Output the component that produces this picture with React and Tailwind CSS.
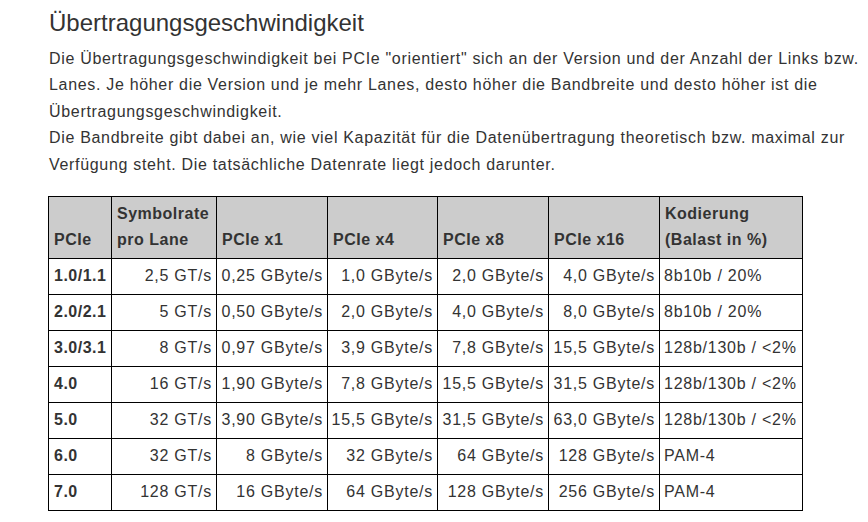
import React from "react";

const rows = [
  ["1.0/1.1", "2,5 GT/s", "0,25 GByte/s", "1,0 GByte/s", "2,0 GByte/s", "4,0 GByte/s", "8b10b / 20%"],
  ["2.0/2.1", "5 GT/s", "0,50 GByte/s", "2,0 GByte/s", "4,0 GByte/s", "8,0 GByte/s", "8b10b / 20%"],
  ["3.0/3.1", "8 GT/s", "0,97 GByte/s", "3,9 GByte/s", "7,8 GByte/s", "15,5 GByte/s", "128b/130b / <2%"],
  ["4.0", "16 GT/s", "1,90 GByte/s", "7,8 GByte/s", "15,5 GByte/s", "31,5 GByte/s", "128b/130b / <2%"],
  ["5.0", "32 GT/s", "3,90 GByte/s", "15,5 GByte/s", "31,5 GByte/s", "63,0 GByte/s", "128b/130b / <2%"],
  ["6.0", "32 GT/s", "8 GByte/s", "32 GByte/s", "64 GByte/s", "128 GByte/s", "PAM-4"],
  ["7.0", "128 GT/s", "16 GByte/s", "64 GByte/s", "128 GByte/s", "256 GByte/s", "PAM-4"],
];

export default function App() {
  return (
    <div
      className="bg-white text-[#333333] pl-[49px] pr-[8px] pt-[8px] w-[868px] h-[522px] overflow-hidden"
      style={{ fontFamily: '"Liberation Sans", Arial, sans-serif' }}
    >
      <h1 className="text-[24px] leading-[29px] font-normal">Übertragungsgeschwindigkeit</h1>
      <p className="mt-[9px] text-[16px] leading-[26.4px] tracking-[0.68px]">
        Die Übertragungsgeschwindigkeit bei PCIe "orientiert" sich an der Version und der Anzahl der Links bzw. Lanes. Je höher die Version und je mehr Lanes, desto höher die Bandbreite und desto höher ist die Übertragungsgeschwindigkeit.
        <br />
        Die Bandbreite gibt dabei an, wie viel Kapazität für die Datenübertragung theoretisch bzw. maximal zur Verfügung steht. Die tatsächliche Datenrate liegt jedoch darunter.
      </p>
      <table className="mt-[18px] -ml-[1px] border-collapse table-fixed w-[754px] text-[16px] leading-[26px]">
        <colgroup>
          <col className="w-[63px]" />
          <col className="w-[105px]" />
          <col className="w-[111px]" />
          <col className="w-[110px]" />
          <col className="w-[111px]" />
          <col className="w-[111px]" />
          <col className="w-[143px]" />
        </colgroup>
        <thead>
          <tr className="bg-[#cccccc]">
            {["PCIe", "Symbolrate pro Lane", "PCIe x1", "PCIe x4", "PCIe x8", "PCIe x16", "Kodierung (Balast in %)"].map((h, i) => (
              <th
                key={i}
                className="border border-black px-[5px] pt-[4px] pb-[5px] text-left align-bottom font-bold tracking-[0.5px]"
              >
                {h === "Symbolrate pro Lane" ? (
                  <>Symbolrate<br />pro Lane</>
                ) : h === "Kodierung (Balast in %)" ? (
                  <>Kodierung<br />(Balast in %)</>
                ) : (
                  h
                )}
              </th>
            ))}
          </tr>
        </thead>
        <tbody>
          {rows.map((r, ri) => (
            <tr key={ri}>
              {r.map((c, ci) => (
                <td
                  key={ci}
                  className={
                    "border border-black pt-[4px] pb-[5px] whitespace-nowrap " +
                    (ci === 0
                      ? "font-bold text-left pl-[5px] pr-[4px] tracking-[0.5px]"
                      : ci === 6
                      ? "text-left pl-[4px] pr-[4px] tracking-[0.75px]"
                      : "text-right pl-[2px] pr-[4px] tracking-[0.75px]")
                  }
                >
                  {c}
                </td>
              ))}
            </tr>
          ))}
        </tbody>
      </table>
    </div>
  );
}
